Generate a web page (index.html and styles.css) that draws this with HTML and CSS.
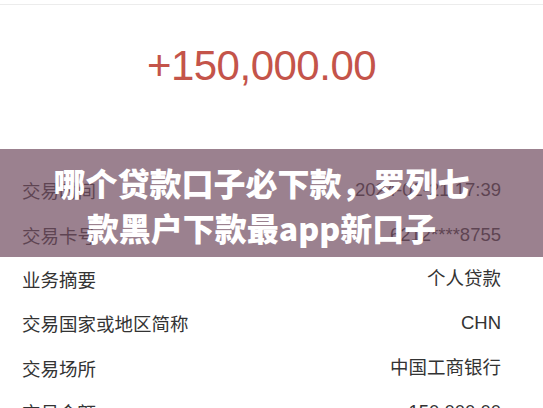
FILE: index.html
```html
<!DOCTYPE html>
<html lang="zh-CN">
<head>
<meta charset="utf-8">
<link rel="stylesheet" href="styles.css">
</head>
<body>
<div class="page">
  <div class="topline"></div>
  <section class="amount-box">
    <div class="amount">+150,000.00</div>
  </section>
  <ul class="rows">
    <li class="row"><span class="label">交易时间</span><span class="value">2024-02-21 17:39</span></li>
    <li class="row"><span class="label">交易卡号</span><span class="value">6212****8755</span></li>
    <li class="row"><span class="label">业务摘要</span><span class="value">个人贷款</span></li>
    <li class="row"><span class="label">交易国家或地区简称</span><span class="value">CHN</span></li>
    <li class="row"><span class="label">交易场所</span><span class="value">中国工商银行</span></li>
    <li class="row"><span class="label">交易金额</span><span class="value">150,000.00</span></li>
  </ul>
  <div class="banner">
    <h1 class="title">哪个贷款口子必下款，罗列七<br>款黑户下款最app新口子</h1>
  </div>
</div>
</body>
</html>
```

FILE: styles.css
```css
html, body {
  margin: 0;
  padding: 0;
  background: #ffffff;
  overflow: hidden;
}
.page {
  position: relative;
  width: 543px;
  height: 408px;
  overflow: hidden;
  padding-top: 4px;
  box-sizing: border-box;
  font-family: "Noto Sans CJK SC", "Liberation Sans", sans-serif;
  color: #333333;
}
.topline {
  height: 1px;
  background: #ececec;
}
.amount-box {
  height: 163px;
  padding: 36px 42px 0 22px;
  box-sizing: border-box;
  display: flex;
  justify-content: center;
}
.amount {
  font-family: "Liberation Sans", Arial, sans-serif;
  font-size: 42px;
  line-height: 50px;
  letter-spacing: -0.5px;
  color: #c4544a;
}
.rows {
  list-style: none;
  margin: 0;
  padding: 0 42px 0 22px;
}
.row {
  height: 44.4px;
  display: flex;
  align-items: center;
  justify-content: space-between;
  font-size: 18.5px;
  line-height: 24px;
}
.value {
  font-family: "Liberation Sans", "Noto Sans CJK SC", sans-serif;
}
.banner {
  position: absolute;
  left: 0;
  top: 149px;
  width: 543px;
  height: 108px;
  background: rgba(112, 76, 96, 0.7);
  padding: 11px 42px 0 22px;
  box-sizing: border-box;
}
.title {
  margin: 0;
  text-align: center;
  color: #ffffff;
  font-family: "Noto Sans CJK SC", sans-serif;
  font-weight: 900;
  font-size: 32px;
  line-height: 45px;
}
```
